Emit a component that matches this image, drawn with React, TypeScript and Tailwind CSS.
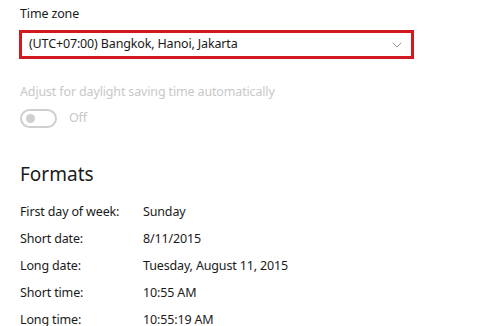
import { ChevronDown } from "lucide-react"

const formats = [
  { label: "First day of week:", value: "Sunday" },
  { label: "Short date:", value: "8/11/2015" },
  { label: "Long date:", value: "Tuesday, August 11, 2015" },
  { label: "Short time:", value: "10:55 AM" },
  { label: "Long time:", value: "10:55:19 AM" },
]

export default function App() {
  return (
    <div
      className="w-[500px] h-[326px] overflow-hidden bg-white pl-5 pt-[5px] text-[12.5px] tracking-[-0.15px] text-[#1a1a1a]"
      style={{ fontFamily: '"Noto Sans", "Open Sans", sans-serif' }}
    >
      <div className="leading-[18px]">Time zone</div>

      {/* Time zone dropdown, highlighted */}
      <div className="mt-[7px] ml-[-1px] flex h-[29px] w-[395px] items-center justify-between border-[3px] border-[#d11a1f] pl-[7px] pr-[6px]">
        <span>(UTC+07:00) Bangkok, Hanoi, Jakarta</span>
        <ChevronDown className="h-4 w-4 text-[#777]" strokeWidth={1.2} />
      </div>

      <div className="mt-[24px] leading-[18px] text-[#c8c8c8]">
        Adjust for daylight saving time automatically
      </div>

      <div className="mt-[8px] flex items-center gap-[12px]">
        <div className="flex h-[19px] w-[37px] items-center rounded-full border-2 border-[#cfcfcf] pl-[4px]">
          <div className="h-[9px] w-[9px] rounded-full bg-[#cfcfcf]" />
        </div>
        <span className="text-[#c8c8c8]">Off</span>
      </div>

      <div className="mt-[33px] text-[19px] leading-[26px] tracking-normal text-[#1a1a1a]">Formats</div>

      <div className="mt-[16px] flex flex-col gap-[9px]">
        {formats.map((f) => (
          <div key={f.label} className="flex leading-[18px]">
            <span className="w-[123px]">{f.label}</span>
            <span>{f.value}</span>
          </div>
        ))}
      </div>
    </div>
  )
}
